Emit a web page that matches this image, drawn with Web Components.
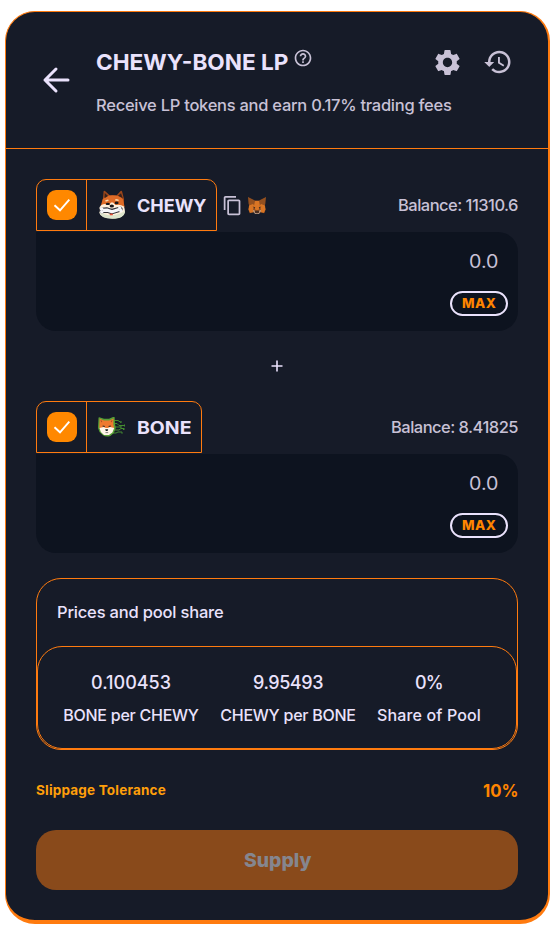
<!DOCTYPE html>
<html lang="en"><head><meta charset="utf-8"><title>Add liquidity</title>
<style>
body{margin:0;padding:11px 4px 0 5px;background:#fff;font-family:Inter,"Open Sans",sans-serif;color:#eae2fc}
</style></head><body>
<pool-card>
  <pool-header slot="header"></pool-header>
  <token-field name="CHEWY" name-width="69" coin="chewy" balance="Balance: 11310.6" balance-width="120" actions></token-field>
  <plus-sign></plus-sign>
  <token-field name="BONE" name-width="54" coin="bone" balance="Balance: 8.41825" balance-width="127"></token-field>
  <price-panel></price-panel>
  <slippage-row></slippage-row>
  <supply-button>Supply</supply-button>
</pool-card>
<script>
const define=(name,html,after)=>customElements.define(name,class extends HTMLElement{
  connectedCallback(){
    if(this.shadowRoot)return;
    const r=this.attachShadow({mode:'open'});
    r.innerHTML=typeof html==='function'?html(this):html;
    if(after)after(this,r);
  }
});

/* A single line of text fitted to the width in "w": tracked, or with "stretch" widened. */
define('fit-text',`<style>:host{display:inline-block;white-space:nowrap;flex:none}span{display:inline-block;transform-origin:0 50%}</style><span><slot></slot></span>`,
 (host,r)=>{
  const w=+host.getAttribute('w'),s=r.querySelector('span'),n=[...host.textContent].length;
  host.style.width=w+'px';
  const natural=s.getBoundingClientRect().width;
  if(host.hasAttribute('stretch'))s.style.transform='scaleX('+((w+.5)/natural).toFixed(4)+')';
  else s.style.letterSpacing=((w-natural)/n).toFixed(3)+'px';
 });

const icons={
 back:`<svg width="28" height="28" viewBox="0 0 28 28" fill="none" stroke="#eae2fc" stroke-width="3" stroke-linecap="round" stroke-linejoin="round"><path d="M26 14H3M14 3 3 14l11 11"/></svg>`,
 help:`<svg width="20" height="20" viewBox="0 0 24 24" fill="#c8c1d6"><path d="M11 18h2v-2h-2v2zm1-16C6.48 2 2 6.48 2 12s4.480 10 10 10 10-4.480 10-10S17.520 2 12 2zm0 18c-4.410 0-8-3.590-8-8s3.590-8 8-8 8 3.590 8 8-3.590 8-8 8zm0-14c-2.210 0-4 1.790-4 4h2c0-1.100.9-2 2-2s2 .9 2 2c0 2-3 1.750-3 5h2c0-2.250 3-2.500 3-5 0-2.210-1.790-4-4-4z"/></svg>`,
 gear:`<svg width="31" height="31" viewBox="0 0 24 24" fill="#c8c1d6"><path d="M19.140 12.940c.04-.3.06-.61.06-.94 0-.32-.02-.64-.07-.94l2.030-1.580c.18-.14.23-.41.12-.61l-1.920-3.320c-.12-.22-.37-.29-.59-.22l-2.390.96c-.5-.38-1.030-.7-1.620-.94l-.36-2.540c-.04-.24-.24-.41-.48-.41h-3.840c-.24 0-.43.17-.47.41l-.36 2.540c-.59.24-1.130.57-1.620.94l-2.390-.96c-.22-.08-.47 0-.59.22L2.740 8.870c-.12.21-.08.47.12.61l2.030 1.580c-.05.3-.09.63-.09.94s.02.64.07.94l-2.030 1.580c-.18.14-.23.41-.12.61l1.920 3.320c.12.22.37.29.59.22l2.390-.96c.5.38 1.030.7 1.620.94l.36 2.540c.05.24.24.41.48.41h3.840c.24 0 .44-.17.47-.41l.36-2.540c.59-.24 1.130-.56 1.620-.94l2.390.96c.22.08.47 0 .59-.22l1.920-3.320c.12-.22.07-.47-.12-.61l-2.010-1.580zM12 15.600c-1.980 0-3.600-1.620-3.600-3.600s1.620-3.600 3.600-3.600 3.600 1.620 3.600 3.600-1.620 3.600-3.600 3.600z"/></svg>`,
 history:`<svg width="30" height="30" viewBox="0 0 24 24" fill="#c8c1d6"><path d="M13 3c-4.970 0-9 4.030-9 9H1l3.890 3.890.07.14L9 12H6c0-3.870 3.130-7 7-7s7 3.130 7 7-3.130 7-7 7c-1.930 0-3.680-.79-4.940-2.060l-1.420 1.420C8.270 19.990 10.510 21 13 21c4.970 0 9-4.030 9-9s-4.030-9-9-9zm-1 5v5l4.280 2.540.72-1.210-3.500-2.080V8H12z"/></svg>`,
 copy:`<svg width="21" height="21" viewBox="0 0 24 24" fill="#c8c1d6"><path d="M16 1H4c-1.100 0-2 .9-2 2v14h2V3h12V1zm3 4H8c-1.100 0-2 .9-2 2v14c0 1.100.9 2 2 2h11c1.100 0 2-.9 2-2V7c0-1.100-.9-2-2-2zm0 16H8V7h11v14z"/></svg>`,
 check:`<svg width="18" height="14" viewBox="0 0 18 14" fill="none" stroke="#fff" stroke-width="1.900"><path d="M1.500 7.300 7 12.300 16.300 1.600"/></svg>`,
 fox:`<svg width="18" height="17" viewBox="0 0 18 17"><path fill="#94501f" d="M0 0 7 3.500h4L18 0l-.7 7-.8 2 1.200 3.500-1.500 3.700-4-1-1.700 1.600h-3l-1.700-1.600-4 1L.3 12.500 1.500 9 .6 7z"/><path fill="#d97524" d="M1 8.500 5 7l1.500 2-1.500 3 .6 3-3.600.8-1.400-3.500zM17 8.500 13 7l-1.500 2 1.500 3-.6 3 3.600.8 1.400-3.500zM7 4h4l1 5-1.500 4h-3L6 9z"/><path fill="#472e22" d="m4.600 9.600 2.600.7-.4 1.500zM13.400 9.600l-2.600.7.4 1.500zM7.200 13.800h3.600l.3 1.400-.8.800H7.700l-.8-.8z"/><path fill="#d8c6b8" d="m5.300 12.800 1.300 1-.2 1.600 1.300 1h2.600l1.300-1-.2-1.600 1.300-1-.5 2.800-1.500 1.300H7.300l-1.500-1.300z"/></svg>`,
 chewy:`<svg width="28" height="30" viewBox="0 0 28 30"><path fill="#9c4619" d="M4.800 10 5.600 1.200Q6 .2 7 1L12 5.500h6.500L22.600 1q1.100-.8 1.500.4L26 9v8H3z"/><path fill="#de6b27" d="M4.600 9.500Q8 5.300 14.500 5.300q7.500 0 10.500 4.200l1.500 7-2.500 5H5L2.500 17z"/><path fill="#38221d" d="M6.800 3 10 6 6.500 8.200zM23 3.200 24.800 8.200 20 5.800z"/><path fill="#fff0dc" d="M1 19q1-4.500 5.500-5l4.500 1 2-2.500h2L17.500 15q5-.8 8.500 1.500 1 3 1 5.500-1.500 6.500-12.700 6.500Q2.500 28.500 1 22z"/><path fill="#dce5cc" d="M1 21q6 4.500 13 4.200 8-.3 13-4.700 0 8.300-12.700 8.300Q2.200 28.800 1 21z"/><path fill="#f7d9b0" d="m7.200 10.200 3-.7.500 1.300-3 .9zM17 10.500l.6-1.400 2.900.3.2 1.500z"/><ellipse cx="9.800" cy="13.900" rx="2" ry="1.200" fill="#17161a"/><ellipse cx="18.600" cy="12.900" rx="2" ry="1.300" fill="#17161a"/><ellipse cx="13.800" cy="16" rx="2.200" ry="1.500" fill="#17161a"/><path d="M3.500 20.500 9 20l4.500 1.600L22 19.200" fill="none" stroke="#34343b" stroke-width="5.300" stroke-linecap="round" stroke-linejoin="round"/><path d="m5 20.300 4.500-.1 4.500 1.500 7-2.200" fill="none" stroke="#f6f7fa" stroke-width="3.300" stroke-linejoin="round"/><g fill="#f6f7fa"><circle cx="3.600" cy="19" r="1.800"/><circle cx="3.800" cy="21.700" r="1.800"/><circle cx="21.800" cy="18" r="1.800"/><circle cx="22.800" cy="20.600" r="1.800"/></g><ellipse cx="13.300" cy="24.400" rx="1.700" ry=".9" fill="#df4a32"/></svg>`,
 bone:`<svg width="28" height="20" viewBox="0 0 28 20"><g fill="none" stroke="#448c30" stroke-width="1"><path d="M14 3.500h6l3 2M15 6.500h4l2 2h6M15 10h8M15 13h6l2-1.500h3M14 16h4l2-1h4"/><path stroke-width="1.800" d="M22.500 5h1M26 8.500h1M22.500 10h1M25 12h1.500M23.500 15.800h1"/></g><path fill="#579f35" d="M.5 1Q.5 0 2 .5l4 1.200h5L15 0q2-.5 1.700 1.500L17 7l.8 4-2 5-3.500 3Q8 20.500 4.700 18L1.500 15 0 11z"/><path fill="#ef7930" d="M1.700 1.700 6 3.400h5.300L15.500 1.500l-.2 6 .8 3-2.300 3.500-9-.1L1.300 10.500z"/><path fill="#fff5e8" d="m1.500 11 4.200-1 2 1h2.300l2-1 4.200 1-1.800 4.500-3.500 2.600H6L2.800 15z"/><path fill="#a5502a" d="m2.500 3 1.800 1-.9 1.600zM14.500 3l-1.900 1 1.200 1.600z"/><path stroke="#2a2b2c" stroke-width="1.100" d="m4.600 8.900 2.200.7M10.600 9.600l2.200-.7"/><path fill="#182326" d="M7.200 12.300h3l-.6 1.700H7.800z"/><path d="M7.500 15.600h2.700" stroke="#555" stroke-width=".7"/></svg>`,
 plus:`<svg width="12" height="12" viewBox="0 0 12 12" stroke="#eae2fc" stroke-width="1.600"><path d="M.5 6h11M6 .5v11"/></svg>`
};

define('ui-icon',h=>`<style>:host{display:inline-flex;flex:none}svg{display:block}</style>${icons[h.getAttribute('name')]}`);

define('pool-card',`<style>
:host{display:block;box-sizing:border-box;height:913px;background:#161b28;border:solid #ff7b0f;border-width:1px 2px 4px 1px;border-radius:30px;overflow:hidden}
main{padding:30px 30px 0}</style><slot name="header"></slot><main><slot></slot></main>`);

define('pool-header',`<style>
:host{display:grid;box-sizing:border-box;grid-template-columns:54px 1fr auto;height:137px;padding:30px 35px 0 36px;border-bottom:1px solid #ff7b0f}
.back{padding-top:24px}
.text{display:flex;flex-direction:column;width:356px;margin-right:-200px}
.title{display:flex;height:40px;gap:5px;align-items:center}
.title fit-text{font-weight:700;font-size:22px;line-height:40px}
.title ui-icon{padding-bottom:8px}
.sub{font-size:16.500px;line-height:24px;color:#c8c1d6;padding-top:11px;font-weight:450}
.tools{display:flex;gap:20px;height:40px;align-items:center}
</style>
<div class="back"><ui-icon name="back"></ui-icon></div>
<div class="text"><div class="title"><fit-text w="192" stretch>CHEWY-BONE LP</fit-text><ui-icon name="help"></ui-icon></div>
<fit-text class="sub" w="355.500">Receive LP tokens and earn 0.17% trading fees</fit-text></div>
<div class="tools"><ui-icon name="gear"></ui-icon><ui-icon name="history"></ui-icon></div>`);

define('token-field',h=>{const a=n=>h.getAttribute(n);return `<style>
:host{display:block}
.top{display:flex;align-items:center;height:52px}
.tab{display:flex;box-sizing:border-box;height:52px;border:1px solid #ff7b0f;border-radius:10px 10px 0 0}
.tick{display:flex;align-items:center;width:50px;box-sizing:border-box;padding-left:10px;border-right:1px solid #ff7b0f;height:50px}
.box{display:flex;align-items:center;justify-content:center;width:30px;height:30px;border-radius:9px;background:#ff8800}
.token{display:flex;align-items:center;padding:0 10px 0 11px;gap:11px}
.token fit-text{font-size:17.500px;font-weight:700}
.actions{display:flex;align-items:center;gap:5px;padding-left:5px}
.balance{margin-left:auto;color:#c8c1d6;font-size:16.500px;font-weight:450}
.input{display:flex;flex-direction:column;align-items:flex-end;box-sizing:border-box;height:99px;margin-top:1px;padding:14px 10px 0;background:#0d131f;border-radius:0 20px 20px 20px;color:#c8c1d6}
.input .value{font-size:18px;line-height:31px;margin-right:10px}
.max{display:flex;align-items:center;justify-content:center;box-sizing:border-box;width:58px;height:25px;margin-top:14px;border:2px solid #eae2fc;border-radius:13px;color:#ff8500;font-size:12.500px;font-weight:800;letter-spacing:.5px}
</style>
<div class="top"><div class="tab"><div class="tick"><div class="box"><ui-icon name="check"></ui-icon></div></div>
<div class="token"><ui-icon name="${a('coin')}"></ui-icon><fit-text stretch w="${a('name-width')}">${a('name')}</fit-text></div></div>
${h.hasAttribute('actions')?'<div class="actions"><ui-icon name="copy"></ui-icon><ui-icon name="fox"></ui-icon></div>':''}
<fit-text class="balance" w="${a('balance-width')}">${a('balance')}</fit-text></div>
<div class="input"><fit-text class="value" w="29" stretch>0.0</fit-text><div class="max"><fit-text w="34" stretch>MAX</fit-text></div></div>`});

define('plus-sign',`<style>:host{display:flex;height:70px;align-items:center;justify-content:center}</style><ui-icon name="plus"></ui-icon>`);

define('price-panel',`<style>
:host{display:block;box-sizing:border-box;height:172px;margin-top:25px;border:1px solid #ff7b0f;border-radius:25px;font-weight:450}
.head{height:67px;line-height:66px;font-size:16.500px;padding-left:20px}
.grid{display:grid;grid-template-columns:136px 136px 104px;gap:21px;box-sizing:border-box;height:103px;padding:20px 0 0 25px;border:1px solid #ff7b0f;border-radius:25px}
.cell{display:flex;flex-direction:column;align-items:center}
.num{font-size:18px;line-height:32px}
.cap{font-size:16px;line-height:33px}
</style><div class="head"><fit-text w="166.500">Prices and pool share</fit-text></div>
<div class="grid">
<div class="cell"><fit-text class="num" w="80">0.100453</fit-text><fit-text class="cap" w="135.500">BONE per CHEWY</fit-text></div>
<div class="cell"><fit-text class="num" w="70">9.95493</fit-text><fit-text class="cap" w="135.500">CHEWY per BONE</fit-text></div>
<div class="cell"><fit-text class="num" w="28">0%</fit-text><fit-text class="cap" w="104">Share of Pool</fit-text></div>
</div>`);

define('slippage-row',`<style>
:host{display:flex;align-items:center;justify-content:space-between;height:80px;font-weight:700}
.label{font-size:13.500px;color:#ff9f0a}.value{font-size:18px;color:#ff8500}
</style><fit-text class="label" w="130">Slippage Tolerance</fit-text><fit-text class="value" w="35" stretch>10%</fit-text>`);

define('supply-button',h=>`<style>
:host{display:flex;align-items:center;justify-content:center;height:60px;border-radius:20px;background:#894a1b;color:#85868f;font-size:19px;font-weight:800}
</style><fit-text w="67" stretch>${h.textContent||'Supply'}</fit-text>`);
</script>
</body></html>
